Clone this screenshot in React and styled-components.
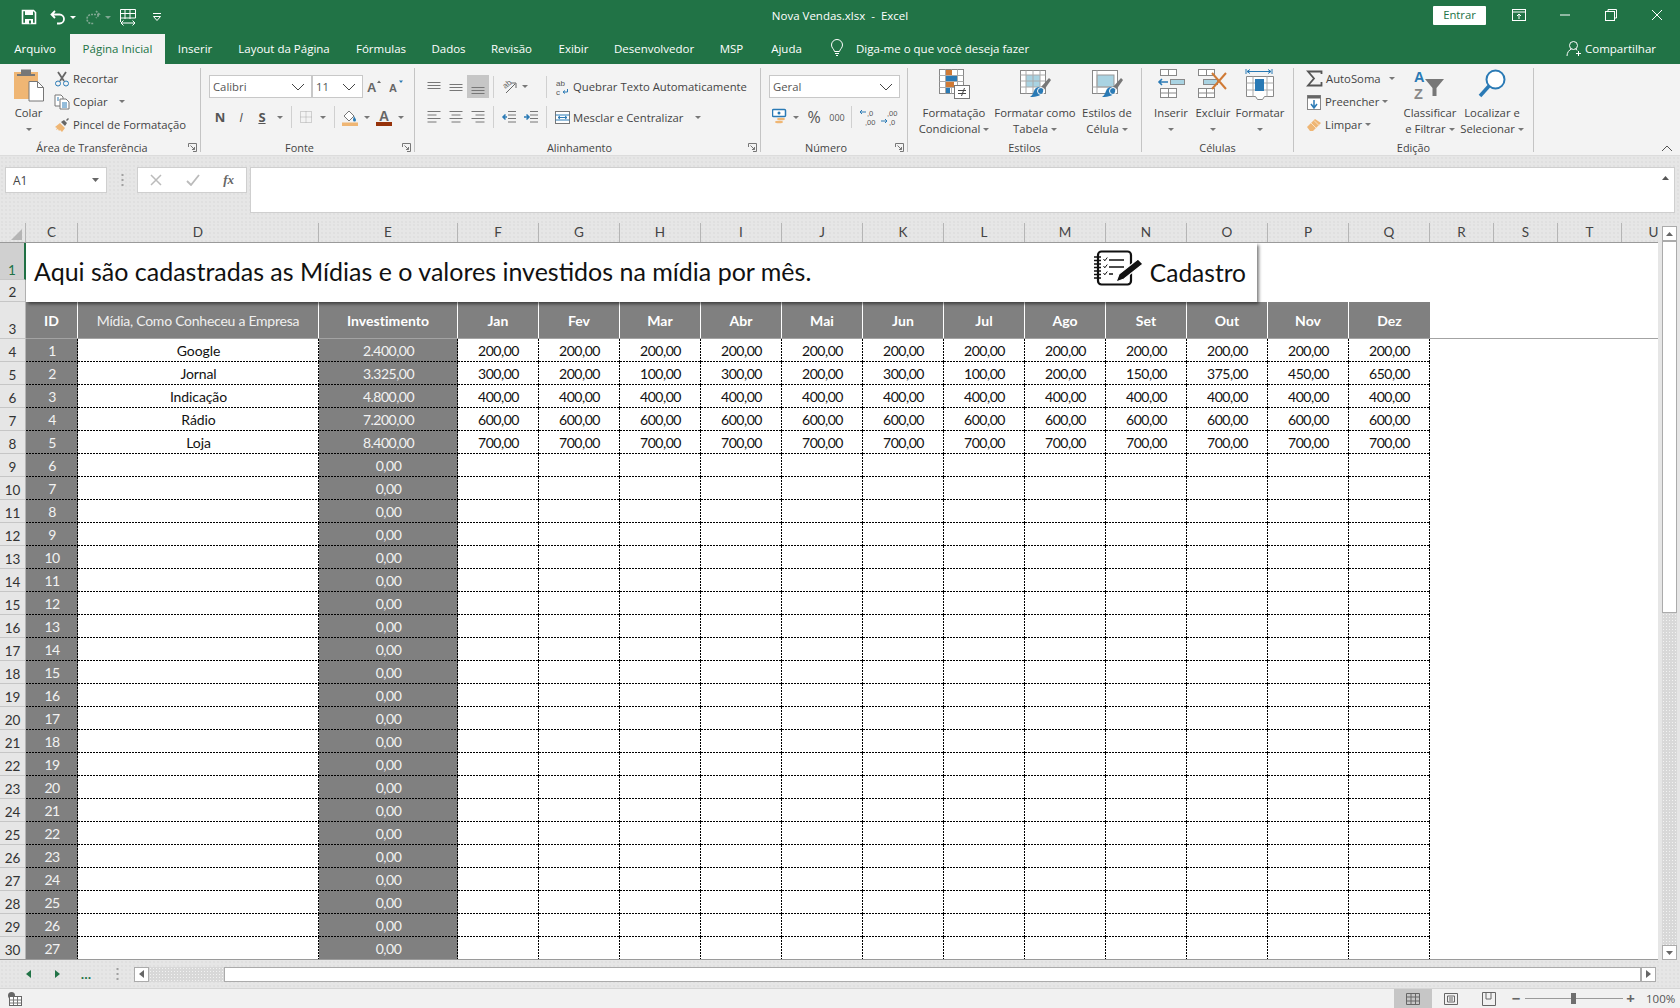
import React from 'react';
import styled, { createGlobalStyle } from 'styled-components';

const UI_FONT = '"Open Sans", "Noto Sans", sans-serif';
const CELL_FONT = 'Lato, "Noto Sans", sans-serif';
const ICON_FONT = '"Liberation Sans"';
const GREEN = '#217346';
const DOTS = 'radial-gradient(#d6d6d6 0.6px, transparent 0.8px)';
const GRID_COLS = '52px 241px 139px repeat(12, 81px)';

const GlobalStyle = createGlobalStyle`
  html, body { margin: 0; padding: 0; overflow: hidden; background: #fff; }
  * { box-sizing: border-box; }
`;

const Page = styled.div`
  width: 1680px;
  height: 1008px;
  display: flex;
  flex-direction: column;
  font-family: ${UI_FONT};
  font-size: 11.3px;
  color: #444;
`;

const IconSvg = styled.svg`
  display: block;
  flex: none;
`;

const Ico = ({ w, h = w, children }) => (
  <IconSvg width={w} height={h} viewBox={`0 0 ${w} ${h}`}>{children}</IconSvg>
);

/* title bar */
const TitleBar = styled.div`
  height: 34px;
  background: ${GREEN};
  display: grid;
  grid-template-columns: 1fr auto 1fr;
  align-items: center;
  color: #fff;
`;
const Qat = styled.div`
  display: flex;
  align-items: center;
  padding-left: 16px;
`;
const QatButton = styled.div`
  width: ${(p) => p.$w}px;
  margin-left: ${(p) => p.$ml || 0}px;
  display: flex;
  justify-content: center;
`;
const DocTitle = styled.div`
  font-size: 11.5px;
  white-space: pre;
  padding-bottom: 3px;
`;
const WinControls = styled.div`
  display: flex;
  align-items: center;
  justify-content: flex-end;
`;
const SignIn = styled.div`
  width: 53px;
  height: 19px;
  background: #fff;
  color: ${GREEN};
  border-radius: 1px;
  text-align: center;
  line-height: 18px;
  margin-right: 10px;
  margin-bottom: 3px;
`;
const WinButton = styled.div`
  width: 46px;
  display: flex;
  justify-content: center;
  margin-bottom: 4px;
`;

/* tabs */
const TabRow = styled.div`
  height: 30px;
  background: ${GREEN};
  display: flex;
  align-items: stretch;
  color: #fff;
  font-size: 11.5px;
`;
const Tab = styled.div`
  width: ${(p) => p.$w}px;
  display: flex;
  align-items: center;
  justify-content: center;
  padding-bottom: 2px;
  background: ${(p) => (p.$active ? '#f3f3f3' : 'transparent')};
  color: ${(p) => (p.$active ? GREEN : '#fff')};
`;
const TellMe = styled.div`
  display: flex;
  align-items: center;
  gap: 11px;
  padding-left: 13px;
  padding-bottom: 2px;
  flex: 1;
`;
const Share = styled.div`
  display: flex;
  align-items: center;
  gap: 3px;
  padding-right: 24px;
  padding-bottom: 2px;
`;

/* ribbon */
const Ribbon = styled.div`
  height: 92px;
  background: #f3f3f3;
  display: flex;
  padding-top: 4px;
  position: relative;
  border-bottom: 1px solid #dcdcdc;
`;
const Group = styled.div`
  width: ${(p) => p.$w}px;
  height: 84px;
  border-right: 1px solid #c4c4c4;
  display: flex;
  flex-direction: column;
`;
const GroupBody = styled.div`
  height: 75px;
  flex: none;
  display: flex;
  padding-left: ${(p) => p.$pad || 0}px;
`;
const Stack = styled.div`
  height: 74px;
  padding-top: 7px;
  display: flex;
  flex-direction: column;
  gap: 8px;
`;
const LabelRow = styled.div`
  height: 9px;
  flex: none;
  display: flex;
  align-items: center;
`;
const GroupLabel = styled.div`
  flex: 1;
  text-align: center;
  color: #444;
  font-size: 10.9px;
`;
const Launcher = styled.div`
  width: 16px;
  display: flex;
  justify-content: center;
`;
const BigButton = styled.div`
  width: ${(p) => p.$w}px;
  display: flex;
  flex-direction: column;
  align-items: center;
  line-height: 16px;
  text-align: center;
  white-space: nowrap;
`;
const BigIcon = styled.div`
  height: 37px;
  display: flex;
  align-items: flex-start;
  justify-content: center;
`;
const CaretLine = styled.div`
  height: 16px;
  display: flex;
  align-items: center;
  justify-content: center;
  gap: 3px;
`;
const Caret = styled.span`
  display: inline-block;
  flex: none;
  width: 0;
  height: 0;
  margin-left: ${(p) => p.$ml || 0}px;
  border-left: 3.5px solid transparent;
  border-right: 3.5px solid transparent;
  border-top: 3.5px solid #777;
`;
const SmallCol = styled.div`
  width: ${(p) => p.$w}px;
  padding-left: ${(p) => p.$pad || 0}px;
  margin-top: -1px;
  display: flex;
  flex-direction: column;
`;
const SmallRow = styled.div`
  height: 23px;
  display: flex;
  align-items: center;
  gap: 3px;
  white-space: nowrap;
`;
const ToolRow = styled.div`
  display: flex;
  align-items: center;
  height: ${(p) => p.$h || 22}px;
`;
const Tool = styled.div`
  width: ${(p) => p.$w}px;
  height: ${(p) => p.$h || 22}px;
  display: flex;
  align-items: center;
  justify-content: center;
  background: ${(p) => (p.$on ? '#c6c6c6' : 'transparent')};
  font-size: ${(p) => p.$fs || 12}px;
  font-weight: ${(p) => (p.$bold ? 700 : 400)};
  font-style: ${(p) => (p.$italic ? 'italic' : 'normal')};
  text-decoration: ${(p) => (p.$under ? 'underline' : 'none')};
  color: #555;
`;
const Sep = styled.div`
  width: 1px;
  height: 22px;
  background: #d0d0d0;
  margin: 0 ${(p) => p.$mr ?? 4}px 0 ${(p) => p.$ml ?? 4}px;
`;
const ComboBox = styled.div`
  width: ${(p) => p.$w}px;
  height: 23px;
  background: #fff;
  border: 1px solid #c8c8c8;
  display: flex;
  align-items: center;
  justify-content: space-between;
  padding: 0 6px 0 3px;
  color: #555;
`;
const LongTool = styled.div`
  display: flex;
  align-items: center;
  gap: 3px;
  padding-left: 8px;
  white-space: nowrap;
`;
const Collapse = styled.div`
  position: absolute;
  right: 7px;
  bottom: 3px;
`;

/* formula bar */
const FormulaBand = styled.div`
  height: 67px;
  background-color: #e6e6e6;
  background-image: ${DOTS};
  background-size: 4px 4px;
  padding: 11px 5px 0 5px;
  display: flex;
  align-items: flex-start;
`;
const NameBox = styled.div`
  width: 102px;
  height: 26px;
  background: #fff;
  border: 1px solid #cfcfcf;
  display: flex;
  align-items: center;
  justify-content: space-between;
  padding: 0 7px;
  color: #444;
  font-size: 12px;
`;
const Grip = styled.div`
  width: ${(p) => p.$w}px;
  height: ${(p) => p.$h}px;
  display: flex;
  align-items: center;
  justify-content: center;
`;
const FxBox = styled.div`
  width: 110px;
  height: 26px;
  background: #fff;
  border: 1px solid #cfcfcf;
  display: flex;
  align-items: center;
  justify-content: space-between;
  padding: 0 12px;
`;
const FxLabel = styled.span`
  font-family: "Liberation Serif", serif;
  font-style: italic;
  font-weight: 700;
  font-size: 13px;
  color: #666;
`;
const FormulaInput = styled.div`
  width: 1425px;
  height: 46px;
  margin-left: 3px;
  background: #fff;
  border: 1px solid #cfcfcf;
  display: flex;
  justify-content: flex-end;
  padding: 8px 5px 0 0;
`;

/* sheet */
const Workspace = styled.div`
  height: 737px;
  display: flex;
  background-color: #e6e6e6;
`;
const SheetCol = styled.div`
  width: 1658px;
  display: flex;
  flex-direction: column;
`;
const ColHeaders = styled.div`
  height: 19px;
  display: flex;
  overflow: hidden;
  background-color: #e6e6e6;
  background-image: ${DOTS};
  background-size: 4px 4px;
`;
const Corner = styled.div`
  width: 26px;
  flex: none;
  display: flex;
  align-items: flex-end;
  justify-content: flex-end;
  padding: 0 3px 2px 0;
  border-right: 1px solid #b5b5b5;
`;
const ColHead = styled.div`
  width: ${(p) => p.$w}px;
  flex: none;
  border-right: 1px solid #b5b5b5;
  text-align: center;
  font-family: ${CELL_FONT};
  font-size: 13.5px;
  line-height: 18px;
  color: #444;
`;
const SheetBody = styled.div`
  height: 718px;
  display: flex;
  border-top: 1px solid #9a9a9a;
  border-bottom: 1px solid #9a9a9a;
  overflow: hidden;
`;
const RowHeaders = styled.div`
  width: 26px;
  flex: none;
  background: #e6e6e6;
  display: flex;
  flex-direction: column;
`;
const RowNum = styled.div`
  height: ${(p) => p.$h}px;
  flex: none;
  display: flex;
  align-items: flex-end;
  justify-content: center;
  font-family: ${CELL_FONT};
  font-size: 13.5px;
  line-height: 17px;
  background: ${(p) => (p.$selected ? '#d0d0d0' : 'transparent')};
  color: ${(p) => (p.$selected ? GREEN : '#333')};
  border-bottom: 1px solid #c6c6c6;
  border-right: ${(p) => (p.$selected ? `2px solid ${GREEN}` : '1px solid #b5b5b5')};
`;
const SheetContent = styled.div`
  flex: 1;
  background: #fff;
  display: flex;
  flex-direction: column;
`;
const TitlePanel = styled.div`
  width: 1231px;
  height: 59px;
  flex: none;
  position: relative;
  z-index: 2;
  background: #fff;
  box-shadow: 2px 2px 3px rgba(0, 0, 0, 0.5);
  display: flex;
  align-items: center;
  justify-content: space-between;
  padding: 0 11px 4px 8px;
  font-family: ${CELL_FONT};
  color: #111;
`;
const PageTitle = styled.div`
  font-size: 25px;
`;
const Cadastro = styled.div`
  display: flex;
  align-items: center;
  gap: 6px;
  font-size: 24.5px;
  padding-top: 3px;
`;
const NotebookWrap = styled.div`
  margin-top: -8px;
`;
const TableHead = styled.div`
  height: 37px;
  flex: none;
  display: grid;
  grid-template-columns: ${GRID_COLS};
  border-bottom: 1px solid #a3a3a3;
`;
const HeadCell = styled.div`
  background: #808080;
  color: ${(p) => (p.$regular ? '#efefef' : '#fff')};
  border-right: 1px solid #fff;
  display: flex;
  align-items: center;
  justify-content: center;
  font-family: ${CELL_FONT};
  font-size: 14px;
  letter-spacing: ${(p) => (p.$regular ? -0.25 : 0.05)}px;
  font-weight: ${(p) => (p.$regular ? 400 : 700)};
  &:last-child { border-right: none; }
`;
const TableRow = styled.div`
  height: 23px;
  flex: none;
  width: 1404px;
  display: grid;
  grid-template-columns: ${GRID_COLS};
`;
const Cell = styled.div`
  background-color: ${(p) => (p.$dark ? '#808080' : '#fff')};
  background-image:
    repeating-linear-gradient(to right, #000 0 2px, transparent 2px 3px),
    repeating-linear-gradient(to bottom, #000 0 2px, transparent 2px 3px);
  background-size: 100% 1px, 1px 100%;
  background-position: 0 100%, 100% 0;
  background-repeat: no-repeat;
  color: ${(p) => (p.$dark ? '#f2f2f2' : '#111')};
  display: flex;
  align-items: center;
  justify-content: center;
  font-family: ${CELL_FONT};
  font-size: 14px;
  letter-spacing: ${(p) => (p.$text ? -0.1 : -0.5)}px;
`;

/* scrollbars */
const VScroll = styled.div`
  width: 22px;
  padding: 3px 3px 0 4px;
  display: flex;
  flex-direction: column;
  background: #e6e6e6;
`;
const ScrollBtn = styled.div`
  width: 15px;
  height: 15px;
  flex: none;
  background: #fff;
  border: 1px solid #ababab;
  display: flex;
  align-items: center;
  justify-content: center;
`;
const Track = styled.div`
  flex: ${(p) => (p.$size ? 'none' : 1)};
  width: ${(p) => (p.$size ? `${p.$size}px` : 'auto')};
  background-color: #d8d8d8;
  background-image: radial-gradient(#f2f2f2 0.6px, transparent 0.8px);
  background-size: 3px 3px;
`;
const Thumb = styled.div`
  flex: ${(p) => (p.$size ? 'none' : 1)};
  height: ${(p) => (p.$size ? `${p.$size}px` : 'auto')};
  background: #fff;
  border: 1px solid #ababab;
`;
const HBand = styled.div`
  height: 28px;
  background-color: #e6e6e6;
  background-image: ${DOTS};
  background-size: 4px 4px;
  display: flex;
  align-items: center;
  padding-left: 14px;
  padding-right: 24px;
`;
const HScroll = styled.div`
  flex: 1;
  height: 15px;
  display: flex;
`;
const NavBtn = styled.div`
  width: ${(p) => p.$w}px;
  display: flex;
  justify-content: center;
  color: ${GREEN};
  font-weight: 700;
  font-size: 12px;
`;

/* status bar */
const StatusBar = styled.div`
  height: 20px;
  background: #f1f1f1;
  border-top: 1px solid #d4d4d4;
  display: flex;
  align-items: center;
  padding-left: 8px;
`;
const Spacer = styled.div`
  flex: 1;
`;
const ViewBtn = styled.div`
  width: ${(p) => p.$w}px;
  height: 19px;
  display: flex;
  align-items: center;
  justify-content: center;
  background: ${(p) => (p.$on ? '#c6c6c6' : 'transparent')};
`;
const ZoomLine = styled.div`
  width: 98px;
  height: 1px;
  background: #9a9a9a;
  position: relative;
`;
const ZoomThumb = styled.div`
  position: absolute;
  left: 46px;
  top: -5px;
  width: 5px;
  height: 11px;
  background: #6e6e6e;
`;
const ZoomBtn = styled.div`
  width: ${(p) => p.$w}px;
  font-size: 15px;
  line-height: 15px;
  font-weight: 700;
  text-align: center;
  color: #666;
`;
const ZoomText = styled.div`
  width: 42px;
  padding-left: 8px;
  font-size: 11.5px;
  color: #555;
`;

/* icons */
const SaveIcon = () => (
  <Ico w={16}>
    <path d="M1.500 1.500h11l2 2v11h-13z" fill="none" stroke="#fff" strokeWidth="1.600" />
    <rect x="4" y="1.500" width="8" height="4.500" fill="#fff" />
    <rect x="4" y="10" width="8" height="4.500" fill="#fff" />
    <rect x="8" y="11.500" width="2" height="3" fill={GREEN} />
  </Ico>
);
const UndoIcon = () => (
  <Ico w={16}>
    <path d="M5 2 1.500 5.500 5 9M2 5.500h7.500a4 4 0 0 1 0 9H7" fill="none" stroke="#fff" strokeWidth="1.800" />
  </Ico>
);
const RedoIcon = () => (
  <Ico w={16}>
    <path d="M11 2l3.500 3.500L11 9M14 5.500H6.500a4 4 0 0 0 0 9H9" fill="none" stroke="#7fa791" strokeWidth="1.600" strokeDasharray="2 1" />
  </Ico>
);
const GridArrowsIcon = () => (
  <Ico w={18}>
    <path d="M1.500 14V1.500h15V10M1.500 5.500h15M1.500 10h15M6 1.500V11M11 1.500V11" fill="none" stroke="#fff" />
    <path d="M2 15h14M4.500 12.500 2 15l2.500 2.500M13.500 12.500 16 15l-2.500 2.500" fill="none" stroke="#fff" />
  </Ico>
);
const QatMoreIcon = () => (
  <Ico w={10}>
    <path d="M1 1.500h8" stroke="#fff" />
    <path d="M1.500 4.500h7L5 8.500z" fill="none" stroke="#fff" />
  </Ico>
);
const WhiteCaret = styled.span`
  width: 0;
  height: 0;
  border-left: 3.5px solid transparent;
  border-right: 3.5px solid transparent;
  border-top: 3.5px solid ${(p) => p.$c || '#fff'};
`;
const ModeIcon = () => (
  <Ico w={14}>
    <rect x="0.500" y="1.500" width="13" height="11" fill="none" stroke="#fff" />
    <path d="M0.500 4h13M7 11V6M5 8l2-2 2 2" fill="none" stroke="#fff" />
  </Ico>
);
const MinIcon = () => <Ico w={12}><path d="M1 6h10" stroke="#fff" /></Ico>;
const RestoreIcon = () => (
  <Ico w={12}>
    <rect x="0.500" y="2.500" width="9" height="9" fill="none" stroke="#fff" />
    <path d="M3 2.500V.5h8.500v8.500H9.500" fill="none" stroke="#fff" />
  </Ico>
);
const CloseIcon = () => <Ico w={12}><path d="M1 1l10 10M11 1 1 11" stroke="#fff" /></Ico>;
const BulbIcon = () => (
  <Ico w={16} h={18}>
    <path d="M5.500 12.500C5 10 2.500 9 2.500 6a5.500 5.500 0 0 1 11 0c0 3-2.500 4-3 6.500z" fill="none" stroke="#fff" />
    <path d="M6 14.500h4M7 16.500h2" stroke="#fff" />
  </Ico>
);
const ShareIcon = () => (
  <Ico w={16} h={17}>
    <circle cx="7.500" cy="5.500" r="4" fill="none" stroke="#fff" />
    <path d="M1 16c0-3.500 2-6 4.500-7M9.500 9c.7.3 1.300.7 1.800 1.200M12.500 11v5M10 13.500h5" fill="none" stroke="#fff" />
  </Ico>
);
const PasteIcon = () => (
  <Ico w={32} h={34}>
    <rect x="1" y="4" width="24" height="27" fill="#efb674" />
    <rect x="8" y="1.500" width="10" height="5" fill="#777" />
    <rect x="4" y="6" width="18" height="2" fill="#777" />
    <path d="M16 13.500h8.500l6 6V33H16z" fill="#fff" stroke="#777" />
    <path d="M24.500 13.500v6h6" fill="none" stroke="#777" />
  </Ico>
);
const ScissorsIcon = () => (
  <Ico w={16}>
    <path d="M4 1l6 9M12 1 6 10" stroke="#666" strokeWidth="1.800" />
    <circle cx="4" cy="12.500" r="2.500" fill="none" stroke="#2a7ab5" />
    <circle cx="12" cy="12.500" r="2.500" fill="none" stroke="#2a7ab5" />
  </Ico>
);
const CopyIcon = () => (
  <Ico w={16}>
    <path d="M1 1h6l2 2v9H1z" fill="#fff" stroke="#777" />
    <path d="M6 5h6l3 3v7H6z" fill="#fff" stroke="#777" />
    <path d="M8 9h5M8 11h5M8 13h5M3 4h2M3 6h2" stroke="#2a7ab5" />
  </Ico>
);
const PainterIcon = () => (
  <Ico w={16}>
    <path d="M1 10l5-4 5 5-3 4-2-2-1 1-1-2-2 1 1-2z" fill="#efb674" />
    <path d="M7 5l3-2 3 3-2 3zM12 3l2-2 1 1-2 2z" fill="#666" />
  </Ico>
);
const LaunchIcon = () => (
  <Ico w={9}>
    <path d="M.5 4V.5h8v8H5M2.500 2.500l4 4M6.500 4v2.500H4" fill="none" stroke="#777" />
  </Ico>
);
const Chevron = () => <Ico w={14} h={8}><path d="M1 1l6 6 6-6" fill="none" stroke="#444" /></Ico>;
const AlignV = ({ y }) => (
  <Ico w={16}>
    <path d={`M1.500 ${y + 0.5}h13M1.500 ${y + 3.5}h13M1.500 ${y + 6.5}h13`} stroke="#777" />
  </Ico>
);
const AlignH = ({ mode }) => {
  const lines = [13, 9, 13, 9].map((len, i) => {
    const x = mode === 'left' ? 1.5 : mode === 'right' ? 14.5 - len : 8 - len / 2;
    return `M${x} ${2.5 + i * 3.5}h${len}`;
  });
  return <Ico w={16}><path d={lines.join('')} stroke="#777" /></Ico>;
};
const OrientIcon = () => (
  <Ico w={20}>
    <text x="4" y="10" fontSize="8" fill="#666" fontFamily={ICON_FONT} transform="rotate(-40 8 8)">ab</text>
    <path d="M7 16 16 7M12 6h5v5" fill="none" stroke="#666" />
  </Ico>
);
const IndentIcon = ({ flip }) => (
  <Ico w={16}>
    <path d="M7 2.500h8M7 6h8M7 9.500h8M7 13h8" stroke="#777" />
    {flip
      ? <path d="M1 8h4M3.500 5.500 6 8l-2.500 2.500" fill="none" stroke="#2a7ab5" strokeWidth="1.500" />
      : <path d="M6 8H2M4.500 5.500 2 8l2.500 2.500" fill="none" stroke="#2a7ab5" strokeWidth="1.500" />}
  </Ico>
);
const WrapIcon = () => (
  <Ico w={15} h={18}>
    <text x="1" y="8" fontSize="8" fill="#555" fontFamily={ICON_FONT}>ab</text>
    <text x="1" y="17" fontSize="8" fill="#555" fontFamily={ICON_FONT}>c</text>
    <path d="M12.500 11v3h-4M10 12.500 8 14l2 1.500" fill="none" stroke="#2a7ab5" />
  </Ico>
);
const MergeIcon = () => (
  <Ico w={15}>
    <rect x="0.500" y="1.500" width="14" height="12" fill="#fff" stroke="#777" />
    <path d="M.5 5h14M.5 10h14M3 7.500h9M5 6l-2 1.500L5 9M10 6l2 1.500L10 9" fill="none" stroke="#2a7ab5" />
  </Ico>
);
const GrowIcon = ({ up }) => (
  <Ico w={15} h={17}>
    <text x="0" y="14" fontSize={up ? 13 : 11} fontWeight="700" fill="#666" fontFamily={ICON_FONT}>A</text>
    <path d={up ? 'M10 5 12 2.500 14 5z' : 'M10 2.500h4L12 5z'} fill={up ? '#666' : '#2a7ab5'} />
  </Ico>
);
const BordersIcon = () => (
  <Ico w={14}>
    <rect x="1.500" y="1.500" width="11" height="11" fill="none" stroke="#aaa" strokeDasharray="1 1" />
    <path d="M7 1.500v11M1.500 7h11" stroke="#aaa" strokeDasharray="1 1" />
  </Ico>
);
const FillIcon = () => (
  <Ico w={16} h={18}>
    <path d="M2 8l5-5 5 5-5 5z" fill="#fff" stroke="#777" />
    <path d="M12 8c1 2 2 3 2 4a1.500 1.500 0 0 1-3 0c0-.5.5-2 1-4z" fill="#2a7ab5" />
    <rect x="0" y="14.500" width="16" height="3.500" fill="#efb674" />
  </Ico>
);
const FontColorIcon = () => (
  <Ico w={16} h={18}>
    <text x="3" y="13" fontSize="14" fontWeight="700" fill="#666" fontFamily={ICON_FONT}>A</text>
    <rect x="0" y="14" width="16" height="4" fill="#96320a" />
  </Ico>
);
const MoneyIcon = () => (
  <Ico w={16} h={18}>
    <rect x="0.500" y="1.500" width="13" height="7" rx="1" fill="#fff" stroke="#2a7ab5" strokeWidth="1.500" />
    <circle cx="7" cy="5" r="1.500" fill="#2a7ab5" />
    <ellipse cx="9" cy="11" rx="4" ry="1.300" fill="#efb674" />
    <ellipse cx="7" cy="14" rx="4" ry="1.300" fill="#efb674" />
  </Ico>
);
const DecimalIcon = ({ more }) => (
  <Ico w={19} h={18}>
    <text x={more ? 7 : 9} y="7.500" fontSize="7.500" fill="#555" fontFamily={ICON_FONT}>{more ? ',00' : ',0'}</text>
    <text x={more ? 9 : 7} y="16.500" fontSize="7.500" fill="#555" fontFamily={ICON_FONT}>{more ? ',0' : ',00'}</text>
    <path d={more ? 'M1 13h6M5 11l2 2-2 2' : 'M8 4H2M4 2 2 4l2 2'} fill="none" stroke="#2a7ab5" />
  </Ico>
);
const CondIcon = () => (
  <Ico w={31} h={32}>
    <rect x="0.500" y="1.500" width="24" height="24" fill="#fff" stroke="#888" />
    <path d="M.5 7.500h24M.5 13.500h24M.5 19.500h24M6.500 1.500v24M12.500 1.500v24M18.500 1.500v24" stroke="#aaa" fill="none" />
    <rect x="7" y="2" width="6" height="5" fill="#d07a35" />
    <rect x="7" y="8" width="11" height="5" fill="#2a7ab5" />
    <rect x="7" y="14" width="8" height="5" fill="#d07a35" />
    <rect x="7" y="20" width="4" height="5" fill="#2a7ab5" />
    <rect x="15.500" y="17.500" width="15" height="13" fill="#fff" stroke="#777" />
    <path d="M19 22.500h8M19 25.500h8M25.500 20l-3 8" stroke="#444" fill="none" />
  </Ico>
);
const BrushOverlay = () => (
  <>
    <path d="M23 19l8-9 2 2-7 10z" fill="#777" />
    <path d="M21 19c3 0 5 2 4 5-1 3-6 5-13 5 3-2 3-4 4-6 1-3 3-4 5-4z" fill="#2a7ab5" />
    <circle cx="23" cy="23" r="3.500" fill="none" stroke="#fff" />
  </>
);
const TableStyleIcon = () => (
  <Ico w={34} h={32}>
    <rect x="2.500" y="2.500" width="25" height="23" fill="#fff" stroke="#888" />
    <rect x="8" y="7" width="14" height="12" fill="#a9d3e2" />
    <path d="M2.500 7h25M2.500 13h25M2.500 19h25M8 2.500v23M15 2.500v23M22 2.500v23" stroke="#aaa" fill="none" />
    <BrushOverlay />
  </Ico>
);
const CellStyleIcon = () => (
  <Ico w={34} h={32}>
    <rect x="2.500" y="2.500" width="25" height="23" fill="#fff" stroke="#888" />
    <rect x="7" y="7" width="17" height="12" fill="#a9d3e2" stroke="#999" />
    <path d="M7 2.500v23M2.500 19h25" stroke="#aaa" fill="none" />
    <BrushOverlay />
  </Ico>
);
const InsertIcon = () => (
  <Ico w={28} h={30}>
    <rect x="3.500" y="1.500" width="16" height="6" fill="#fff" stroke="#888" />
    <path d="M11.500 1.500v6" stroke="#888" />
    <rect x="3.500" y="20.500" width="16" height="9" fill="#fff" stroke="#888" />
    <path d="M11.500 20.500v9M3.500 25h16" stroke="#888" />
    <rect x="13.500" y="11.500" width="14" height="5" fill="#a9d3e2" stroke="#888" />
    <path d="M2 14h9M5 11l-3 3 3 3" fill="none" stroke="#2a7ab5" strokeWidth="1.600" />
  </Ico>
);
const DeleteIcon = () => (
  <Ico w={32} h={30}>
    <rect x="1.500" y="1.500" width="16" height="6" fill="#fff" stroke="#888" />
    <path d="M9.500 1.500v6" stroke="#888" />
    <rect x="1.500" y="20.500" width="16" height="9" fill="#fff" stroke="#888" />
    <path d="M9.500 20.500v9M1.500 25h16" stroke="#888" />
    <rect x="6.500" y="11.500" width="14" height="5" fill="#a9d3e2" stroke="#888" />
    <path d="M15 5l14 16M29 5 15 21" stroke="#d07a35" strokeWidth="2" />
  </Ico>
);
const FormatIcon = () => (
  <Ico w={30} h={32}>
    <path d="M1 1v5M27 1v5M2 3.500h24M5 1.500 2 3.500l3 2M23 1.500l3 2-3 2" fill="none" stroke="#2a7ab5" />
    <path d="M1.500 8.500h27v20h-9l-2 3h-5l-2-3h-9z" fill="#fff" stroke="#888" />
    <path d="M1.500 15h27M1.500 22h27M8 8.500v20M22 8.500v20" stroke="#aaa" />
    <rect x="10" y="11" width="9" height="12" fill="#2a7ab5" />
  </Ico>
);
const SumIcon = () => (
  <Ico w={17}>
    <path d="M15.500 4V1.500H2l6 7-6 7h13.500V12" fill="none" stroke="#555" strokeWidth="1.800" />
  </Ico>
);
const FillDownIcon = () => (
  <Ico w={16}>
    <rect x="1.500" y="1.500" width="13" height="14" fill="#fff" stroke="#888" />
    <rect x="1.500" y="1.500" width="13" height="3" fill="#666" />
    <path d="M8 6v8M5 10l3 4 3-4" fill="none" stroke="#2a7ab5" strokeWidth="1.500" />
  </Ico>
);
const EraserIcon = () => (
  <Ico w={16}>
    <path d="M1 10l8-8 6 4-8 8H4z" fill="#efb674" />
    <path d="M5 6l5 5M8 3.500l5 5" stroke="#f8e2c6" />
  </Ico>
);
const SortIcon = () => (
  <Ico w={34} h={34}>
    <text x="1" y="14" fontSize="14.500" fontWeight="700" fill="#2a7ab5" fontFamily={ICON_FONT}>A</text>
    <text x="1" y="30.500" fontSize="14.500" fontWeight="700" fill="#888" fontFamily={ICON_FONT}>Z</text>
    <path d="M12 11h19l-7.500 9v8h-4v-8z" fill="#777" />
  </Ico>
);
const FindIcon = () => (
  <Ico w={30} h={32}>
    <circle cx="18.500" cy="11.500" r="9" fill="#fff" stroke="#2a7ab5" strokeWidth="2" />
    <path d="M12 18 3 28" stroke="#2a7ab5" strokeWidth="3.500" />
  </Ico>
);
const CornerIcon = () => <Ico w={11} h={11}><path d="M11 0v11H0z" fill="#b5b5b5" /></Ico>;
const UpArrow = ({ c = '#666' }) => <Ico w={7} h={4}><path d="M0 4 3.500 0 7 4z" fill={c} /></Ico>;
const DownArrow = () => <Ico w={7} h={4}><path d="M0 0h7L3.500 4z" fill="#666" /></Ico>;
const SideArrow = ({ left, c = '#666' }) => (
  <Ico w={5} h={8}><path d={left ? 'M5 0v8L0 4z' : 'M0 0v8l5-4z'} fill={c} /></Ico>
);
const VDots = () => (
  <Ico w={3} h={13}><path d="M1.500 0v2M1.500 5v2M1.500 10v2" stroke="#a0a0a0" strokeWidth="2" /></Ico>
);
const NotebookIcon = () => (
  <Ico w={50} h={36}>
    <rect x="4" y="1.500" width="33" height="33" rx="3.500" fill="#fff" stroke="#111" strokeWidth="2.200" />
    <path d="M0 7h7M0 10.500h7M0 14h7M0 17.500h7M0 21h7M0 24.500h7M0 28h7" stroke="#111" strokeWidth="1.400" />
    <path d="M9.500 9l1.300 1.800 2.500-3.300M9.500 16l1.300 1.800 2.500-3.300M9.500 23l1.300 1.800 2.500-3.300" fill="none" stroke="#111" />
    <path d="M15 10h15M15 17h15M15 24h4" stroke="#111" strokeWidth="1.300" />
    <path d="M44 9l5 5-19 15-8 3 3-8z" fill="#111" stroke="#fff" strokeWidth="1.200" />
  </Ico>
);
const ReadyIcon = () => (
  <Ico w={14} h={14}>
    <circle cx="3.500" cy="3.500" r="3.500" fill="#666" />
    <rect x="1.500" y="4.500" width="12" height="9" fill="#fff" stroke="#666" />
    <path d="M2 8h11M2 11h11M5.500 5v8M9.500 5v8" stroke="#777" />
  </Ico>
);
const NormalViewIcon = () => (
  <Ico w={14}><path d="M.5 1.500h13v11H.5zM.5 5h13M.5 9h13M5 1.500v11M9.500 1.500v11" fill="none" stroke="#666" /></Ico>
);
const LayoutViewIcon = () => (
  <Ico w={14}><path d="M.5 1.500h13v11H.5zM3.500 4h7v6h-7zM5 6h4M5 8h4" fill="none" stroke="#666" /></Ico>
);
const BreakViewIcon = () => (
  <Ico w={14}><path d="M.5 .5h13v13H.5zM9 .5V7H4V.5" fill="none" stroke="#666" /></Ico>
);

/* data */
const TABS = [
  ['Arquivo', 70], ['Página Inicial', 95, true], ['Inserir', 60], ['Layout da Página', 118], ['Fórmulas', 76],
  ['Dados', 59], ['Revisão', 67], ['Exibir', 57], ['Desenvolvedor', 104], ['MSP', 51], ['Ajuda', 59],
];
const COLUMNS = [
  ['C', 52], ['D', 241], ['E', 139], ...'FGHIJKLMNOPQ'.split('').map((c) => [c, 81]),
  ['R', 64], ['S', 64], ['T', 64], ['U', 64],
];
const MONTHS = ['Jan', 'Fev', 'Mar', 'Abr', 'Mai', 'Jun', 'Jul', 'Ago', 'Set', 'Out', 'Nov', 'Dez'];
const MEDIA = [
  { name: 'Google', total: '2.400,00', values: Array(12).fill('200,00') },
  { name: 'Jornal', total: '3.325,00', values: ['300,00', '200,00', '100,00', '300,00', '200,00', '300,00', '100,00', '200,00', '150,00', '375,00', '450,00', '650,00'] },
  { name: 'Indicação', total: '4.800,00', values: Array(12).fill('400,00') },
  { name: 'Rádio', total: '7.200,00', values: Array(12).fill('600,00') },
  { name: 'Loja', total: '8.400,00', values: Array(12).fill('700,00') },
];
const ROWS = Array.from({ length: 27 }, (_, i) => MEDIA[i] || { name: '', total: '0,00', values: Array(12).fill('') });
const ROW_NUMBERS = Array.from({ length: 30 }, (_, i) => i + 1);
const rowHeight = (n) => (n === 1 || n === 3 ? 37 : n === 2 ? 22 : 23);

const Big = ({ w, icon, lines, caretOnly }) => (
  <BigButton $w={w}>
    <BigIcon>{icon}</BigIcon>
    {lines[0] && <div>{lines[0]}</div>}
    {caretOnly
      ? <CaretLine><Caret /></CaretLine>
      : <CaretLine>{lines[1]}<Caret /></CaretLine>}
  </BigButton>
);

export default function App() {
  return (
    <Page>
      <GlobalStyle />
      <TitleBar>
        <Qat>
          <QatButton $w={26}><SaveIcon /></QatButton>
          <QatButton $w={22} $ml={5}><UndoIcon /></QatButton>
          <QatButton $w={7}><WhiteCaret /></QatButton>
          <QatButton $w={22} $ml={6}><RedoIcon /></QatButton>
          <QatButton $w={7}><WhiteCaret $c="#7fa791" /></QatButton>
          <QatButton $w={24} $ml={5}><GridArrowsIcon /></QatButton>
          <QatButton $w={20} $ml={7}><QatMoreIcon /></QatButton>
        </Qat>
        <DocTitle>Nova Vendas.xlsx  -  Excel</DocTitle>
        <WinControls>
          <SignIn>Entrar</SignIn>
          <WinButton><ModeIcon /></WinButton>
          <WinButton><MinIcon /></WinButton>
          <WinButton><RestoreIcon /></WinButton>
          <WinButton><CloseIcon /></WinButton>
        </WinControls>
      </TitleBar>

      <TabRow>
        {TABS.map(([label, w, active]) => (
          <Tab key={label} $w={w} $active={active}>{label}</Tab>
        ))}
        <TellMe><BulbIcon />Diga-me o que você deseja fazer</TellMe>
        <Share><ShareIcon />Compartilhar</Share>
      </TabRow>

      <Ribbon>
        <Group $w={201}>
          <GroupBody $pad={4}>
            <Big w={49} icon={<PasteIcon />} lines={['Colar']} caretOnly />
            <SmallCol $w={140} $pad={1}>
              <SmallRow><ScissorsIcon />Recortar</SmallRow>
              <SmallRow><CopyIcon />Copiar<Caret $ml={8} /></SmallRow>
              <SmallRow><PainterIcon />Pincel de Formatação</SmallRow>
            </SmallCol>
          </GroupBody>
          <LabelRow>
            <GroupLabel>Área de Transferência</GroupLabel>
            <Launcher><LaunchIcon /></Launcher>
          </LabelRow>
        </Group>

        <Group $w={214}>
          <GroupBody $pad={8}>
            <Stack>
              <ToolRow $h={23}>
                <ComboBox $w={103}>Calibri<Chevron /></ComboBox>
                <ComboBox $w={51}>11<Chevron /></ComboBox>
                <Tool $w={22}><GrowIcon up /></Tool>
                <Tool $w={22}><GrowIcon /></Tool>
              </ToolRow>
              <ToolRow>
                <Tool $w={22} $bold $fs={13}>N</Tool>
                <Tool $w={20} $italic $fs={13}>I</Tool>
                <Tool $w={22} $under $bold $fs={13}>S</Tool>
                <Tool $w={14}><Caret /></Tool>
                <Sep />
                <Tool $w={20}><BordersIcon /></Tool>
                <Tool $w={14}><Caret /></Tool>
                <Sep />
                <Tool $w={22}><FillIcon /></Tool>
                <Tool $w={12}><Caret /></Tool>
                <Tool $w={22}><FontColorIcon /></Tool>
                <Tool $w={12}><Caret /></Tool>
              </ToolRow>
            </Stack>
          </GroupBody>
          <LabelRow>
            <GroupLabel>Fonte</GroupLabel>
            <Launcher><LaunchIcon /></Launcher>
          </LabelRow>
        </Group>

        <Group $w={346}>
          <GroupBody $pad={8}>
            <Stack>
              <ToolRow $h={23}>
                <Tool $w={22} $h={23}><AlignV y={3} /></Tool>
                <Tool $w={22} $h={23}><AlignV y={5} /></Tool>
                <Tool $w={22} $h={23} $on><AlignV y={8} /></Tool>
                <Sep />
                <Tool $w={22}><OrientIcon /></Tool>
                <Tool $w={10}><Caret /></Tool>
                <Sep $ml={16} $mr={0} />
                <LongTool><WrapIcon />Quebrar Texto Automaticamente</LongTool>
              </ToolRow>
              <ToolRow>
                <Tool $w={22}><AlignH mode="left" /></Tool>
                <Tool $w={22}><AlignH mode="center" /></Tool>
                <Tool $w={22}><AlignH mode="right" /></Tool>
                <Sep />
                <Tool $w={22}><IndentIcon /></Tool>
                <Tool $w={22}><IndentIcon flip /></Tool>
                <Sep $mr={0} />
                <LongTool><MergeIcon />Mesclar e Centralizar<Caret $ml={9} /></LongTool>
              </ToolRow>
            </Stack>
          </GroupBody>
          <LabelRow>
            <GroupLabel>Alinhamento</GroupLabel>
            <Launcher><LaunchIcon /></Launcher>
          </LabelRow>
        </Group>

        <Group $w={147}>
          <GroupBody $pad={8}>
            <Stack>
              <ToolRow $h={23}>
                <ComboBox $w={131}>Geral<Chevron /></ComboBox>
              </ToolRow>
              <ToolRow>
                <Tool $w={22}><MoneyIcon /></Tool>
                <Tool $w={10}><Caret /></Tool>
                <Tool $w={26} $fs={16}>%</Tool>
                <Tool $w={20} $fs={9}>000</Tool>
                <Sep />
                <Tool $w={22}><DecimalIcon /></Tool>
                <Tool $w={22}><DecimalIcon more /></Tool>
              </ToolRow>
            </Stack>
          </GroupBody>
          <LabelRow>
            <GroupLabel>Número</GroupLabel>
            <Launcher><LaunchIcon /></Launcher>
          </LabelRow>
        </Group>

        <Group $w={234}>
          <GroupBody $pad={7}>
            <Big w={78} icon={<CondIcon />} lines={['Formatação', 'Condicional']} />
            <Big w={84} icon={<TableStyleIcon />} lines={['Formatar como', 'Tabela']} />
            <Big w={60} icon={<CellStyleIcon />} lines={['Estilos de', 'Célula']} />
          </GroupBody>
          <LabelRow><GroupLabel>Estilos</GroupLabel></LabelRow>
        </Group>

        <Group $w={152}>
          <GroupBody $pad={8}>
            <Big w={42} icon={<InsertIcon />} lines={['Inserir']} caretOnly />
            <Big w={42} icon={<DeleteIcon />} lines={['Excluir']} caretOnly />
            <Big w={52} icon={<FormatIcon />} lines={['Formatar']} caretOnly />
          </GroupBody>
          <LabelRow><GroupLabel>Células</GroupLabel></LabelRow>
        </Group>

        <Group $w={240}>
          <GroupBody $pad={12}>
            <SmallCol $w={92}>
              <SmallRow><SumIcon />AutoSoma<Caret $ml={5} /></SmallRow>
              <SmallRow><FillDownIcon />Preencher<Caret /></SmallRow>
              <SmallRow><EraserIcon />Limpar<Caret /></SmallRow>
            </SmallCol>
            <Big w={64} icon={<SortIcon />} lines={['Classificar', 'e Filtrar']} />
            <Big w={60} icon={<FindIcon />} lines={['Localizar e', 'Selecionar']} />
          </GroupBody>
          <LabelRow><GroupLabel>Edição</GroupLabel></LabelRow>
        </Group>

        <Collapse>
          <Ico w={12} h={7}><path d="M1 6l5-5 5 5" fill="none" stroke="#555" /></Ico>
        </Collapse>
      </Ribbon>

      <FormulaBand>
        <NameBox>A1<DownArrow /></NameBox>
        <Grip $w={30} $h={26}><VDots /></Grip>
        <FxBox>
          <Ico w={12}><path d="M1 1l10 10M11 1 1 11" stroke="#bbb" strokeWidth="1.500" /></Ico>
          <Ico w={14} h={12}><path d="M1 7l4 4 8-10" fill="none" stroke="#bbb" strokeWidth="1.800" /></Ico>
          <FxLabel>fx</FxLabel>
        </FxBox>
        <FormulaInput><UpArrow c="#555" /></FormulaInput>
      </FormulaBand>

      <Workspace>
        <SheetCol>
          <ColHeaders>
            <Corner><CornerIcon /></Corner>
            {COLUMNS.map(([letter, w]) => (
              <ColHead key={letter} $w={w}>{letter}</ColHead>
            ))}
          </ColHeaders>
          <SheetBody>
            <RowHeaders>
              {ROW_NUMBERS.map((n) => (
                <RowNum key={n} $h={rowHeight(n)} $selected={n === 1}>{n}</RowNum>
              ))}
            </RowHeaders>
            <SheetContent>
              <TitlePanel>
                <PageTitle>Aqui são cadastradas as Mídias e o valores investidos na mídia por mês.</PageTitle>
                <Cadastro>
                  <NotebookWrap><NotebookIcon /></NotebookWrap>
                  Cadastro
                </Cadastro>
              </TitlePanel>
              <TableHead>
                <HeadCell>ID</HeadCell>
                <HeadCell $regular>Mídia, Como Conheceu a Empresa</HeadCell>
                <HeadCell>Investimento</HeadCell>
                {MONTHS.map((m) => <HeadCell key={m}>{m}</HeadCell>)}
              </TableHead>
              {ROWS.map((row, i) => (
                <TableRow key={i}>
                  <Cell $dark>{i + 1}</Cell>
                  <Cell $text>{row.name}</Cell>
                  <Cell $dark>{row.total}</Cell>
                  {row.values.map((v, j) => <Cell key={j}>{v}</Cell>)}
                </TableRow>
              ))}
            </SheetContent>
          </SheetBody>
        </SheetCol>
        <VScroll>
          <ScrollBtn><UpArrow /></ScrollBtn>
          <Thumb $size={372} />
          <Track />
          <ScrollBtn><DownArrow /></ScrollBtn>
        </VScroll>
      </Workspace>

      <HBand>
        <NavBtn $w={29}><SideArrow left c={GREEN} /></NavBtn>
        <NavBtn $w={29}><SideArrow c={GREEN} /></NavBtn>
        <NavBtn $w={28}>...</NavBtn>
        <NavBtn $w={34}><VDots /></NavBtn>
        <HScroll>
          <ScrollBtn><SideArrow left /></ScrollBtn>
          <Track $size={75} />
          <Thumb />
          <ScrollBtn><SideArrow /></ScrollBtn>
        </HScroll>
      </HBand>

      <StatusBar>
        <ReadyIcon />
        <Spacer />
        <ViewBtn $w={38} $on><NormalViewIcon /></ViewBtn>
        <ViewBtn $w={38}><LayoutViewIcon /></ViewBtn>
        <ViewBtn $w={37}><BreakViewIcon /></ViewBtn>
        <ZoomBtn $w={18}>−</ZoomBtn>
        <ZoomLine><ZoomThumb /></ZoomLine>
        <ZoomBtn $w={15}>+</ZoomBtn>
        <ZoomText>100%</ZoomText>
      </StatusBar>
    </Page>
  );
}
